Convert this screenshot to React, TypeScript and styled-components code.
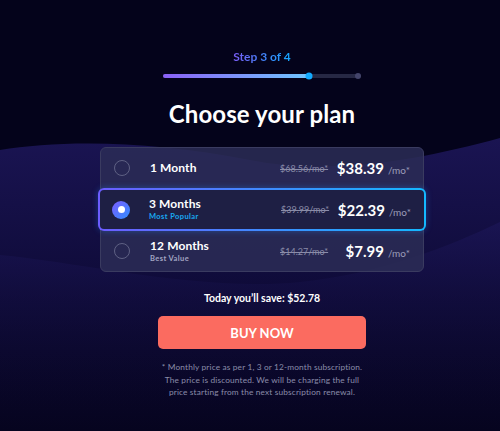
import styled, { createGlobalStyle } from 'styled-components'

const GlobalStyle = createGlobalStyle`
	html, body {
		margin: 0;
		padding: 0;
		background: #04031b;
	}
	* {
		box-sizing: border-box;
	}
`

const waveSvg = `<svg xmlns="http://www.w3.org/2000/svg" width="500" height="431" viewBox="0 0 500 431">
<defs>
<linearGradient id="a" x1="0" y1="0" x2="0" y2="1">
<stop offset="0" stop-color="#1a1452"/>
<stop offset="0.45" stop-color="#100c3c"/>
<stop offset="1" stop-color="#06041f"/>
</linearGradient>
<linearGradient id="b" x1="0" y1="0" x2="0" y2="1">
<stop offset="0" stop-color="#1c1658" stop-opacity="0.7"/>
<stop offset="1" stop-color="#06041f" stop-opacity="0"/>
</linearGradient>
</defs>
<path d="M0 150 C60 140 150 140 250 160 C330 176 420 160 500 138 L500 431 L0 431 Z" fill="url(#a)"/>
<path d="M0 255 C80 262 200 292 300 282 C380 274 450 246 500 222 L500 431 L0 431 Z" fill="url(#b)"/>
</svg>`

const Page = styled.div`
	min-height: 431px;
	display: flex;
	flex-direction: column;
	align-items: center;
	padding: 50px 0 0 24px;
	font-family: Lato, 'Noto Sans', sans-serif;
	color: #ffffff;
	background: #04031b url("data:image/svg+xml,${encodeURIComponent(waveSvg)}") no-repeat top left;
`

const StepLabel = styled.div`
	font-size: 12px;
	font-weight: 700;
	line-height: 14px;
	background: linear-gradient(90deg, #7a5cf5 0%, #12a6ff 100%);
	-webkit-background-clip: text;
	background-clip: text;
	color: transparent;
`

const ProgressTrack = styled.div`
	position: relative;
	width: 198px;
	height: 4px;
	margin-top: 10px;
	border-radius: 2px;
	background: #262844;
`

const ProgressFill = styled.div`
	height: 4px;
	border-radius: 2px;
	background: linear-gradient(90deg, #8a60f6 0%, #6fc6ff 100%);
`

const ProgressDot = styled.span<{ $left: string; $color: string; $size: number }>`
	position: absolute;
	top: 50%;
	left: ${p => p.$left};
	width: ${p => p.$size}px;
	height: ${p => p.$size}px;
	border-radius: 50%;
	background: ${p => p.$color};
	transform: translate(-50%, -50%);
`

const Title = styled.h1`
	margin: 22px 0 0;
	font-size: 24px;
	font-weight: 700;
	line-height: 28px;
	letter-spacing: 0.1px;
`

const PlanCard = styled.div`
	width: 324px;
	margin-top: 19px;
	border: 1px solid #3a3b60;
	border-radius: 6px;
	background: rgba(44, 45, 86, 0.85);
`

const PlanRow = styled.div<{ $selected?: boolean }>`
	display: grid;
	grid-template-columns: 16px 1fr 61px 69px;
	align-items: center;
	height: ${p => (p.$selected ? '43px' : '40px')};
	padding: 0 13px;
	margin: ${p => (p.$selected ? '0 -3px' : '0')};
	border: ${p => (p.$selected ? '2px solid transparent' : 'none')};
	border-radius: ${p => (p.$selected ? '6px' : '0')};
	background: ${p =>
		p.$selected
			? 'linear-gradient(#1e1f44, #1e1f44) padding-box, linear-gradient(90deg, #6c5cff 0%, #14b8ff 100%) border-box'
			: 'transparent'};
	box-shadow: ${p => (p.$selected ? '0 0 6px rgba(40, 140, 255, 0.35)' : 'none')};
`

const Radio = styled.span<{ $checked?: boolean }>`
	display: flex;
	align-items: center;
	justify-content: center;
	width: ${p => (p.$checked ? '18px' : '16px')};
	height: ${p => (p.$checked ? '18px' : '16px')};
	margin-left: ${p => (p.$checked ? '-1px' : '0')};
	border-radius: 50%;
	border: ${p => (p.$checked ? 'none' : '1.5px solid #5f6184')};
	background: ${p => (p.$checked ? 'linear-gradient(135deg, #7c5cff 0%, #2f8dff 100%)' : 'transparent')};

	&::after {
		content: '';
		display: ${p => (p.$checked ? 'block' : 'none')};
		width: 7px;
		height: 7px;
		border-radius: 50%;
		background: #ffffff;
	}
`

const PlanName = styled.div`
	padding-left: 20px;
	display: flex;
	flex-direction: column;
`

const PlanTitle = styled.span`
	font-size: 12px;
	font-weight: 700;
	line-height: 14px;
	letter-spacing: 0.1px;
	color: #ffffff;
`

const PlanTag = styled.span<{ $color: string }>`
	margin-top: 1px;
	font-size: 7.5px;
	font-weight: 700;
	line-height: 10px;
	letter-spacing: 0.4px;
	color: ${p => p.$color};
`

const OldPrice = styled.span`
	font-size: 9px;
	color: #8a8ca8;
	text-decoration: line-through;
	white-space: nowrap;
`

const Price = styled.span`
	display: flex;
	align-items: baseline;
	justify-content: flex-end;
	font-size: 15px;
	font-weight: 700;
	white-space: nowrap;
`

const PerMonth = styled.span`
	margin-left: 4px;
	font-size: 10px;
	font-weight: 400;
	color: #9b9db9;
`

const Savings = styled.div`
	margin-top: 19px;
	font-size: 10.5px;
	font-weight: 700;
	line-height: 14px;
`

const BuyButton = styled.button`
	width: 208px;
	height: 33px;
	margin-top: 11px;
	border: none;
	border-radius: 5px;
	background: #fb6b60;
	color: #ffffff;
	font-family: inherit;
	font-size: 13px;
	font-weight: 700;
	cursor: pointer;
`

const Footnote = styled.p`
	margin: 12px 0 0;
	font-size: 8.3px;
	line-height: 12.5px;
	letter-spacing: 0.15px;
	text-align: center;
	color: #8a8ca9;
`

const plans = [
	{ name: '1 Month', tag: '', tagColor: '', old: '$68.56/mo*', price: '$38.39', selected: false },
	{ name: '3 Months', tag: 'Most Popular', tagColor: '#19a9f2', old: '$39.99/mo*', price: '$22.39', selected: true },
	{ name: '12 Months', tag: 'Best Value', tagColor: '#a3a5c2', old: '$14.27/mo*', price: '$7.99', selected: false },
]

export default function App() {
	const progress = 73.5

	return (
		<>
			<GlobalStyle />
			<Page>
				<StepLabel>Step 3 of 4</StepLabel>
				<ProgressTrack>
					<ProgressFill style={{ width: progress + '%' }} />
					<ProgressDot $left={progress + '%'} $color="#12aaff" $size={7} />
					<ProgressDot $left="calc(100% - 3px)" $color="#43446a" $size={6} />
				</ProgressTrack>
				<Title>Choose your plan</Title>
				<PlanCard>
					{plans.map(plan => (
						<PlanRow key={plan.name} $selected={plan.selected}>
							<Radio $checked={plan.selected} />
							<PlanName>
								<PlanTitle>{plan.name}</PlanTitle>
								{plan.tag && <PlanTag $color={plan.tagColor}>{plan.tag}</PlanTag>}
							</PlanName>
							<OldPrice>{plan.old}</OldPrice>
							<Price>
								{plan.price}
								<PerMonth>/mo*</PerMonth>
							</Price>
						</PlanRow>
					))}
				</PlanCard>
				<Savings>Today you’ll save: $52.78</Savings>
				<BuyButton>BUY NOW</BuyButton>
				<Footnote>
					* Monthly price as per 1, 3 or 12-month subscription.
					<br />
					The price is discounted. We will be charging the full
					<br />
					price starting from the next subscription renewal.
				</Footnote>
			</Page>
		</>
	)
}
